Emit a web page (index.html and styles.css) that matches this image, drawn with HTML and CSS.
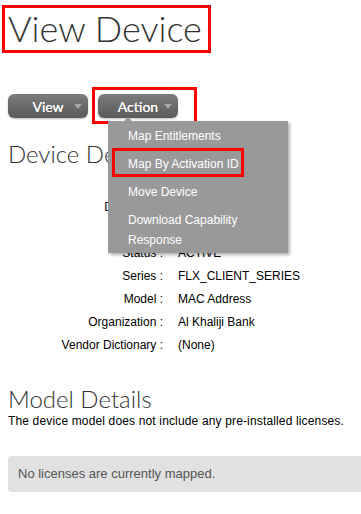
FILE: index.html
```html
<!DOCTYPE html>
<html>
<head>
<meta charset="utf-8">
<link rel="stylesheet" href="styles.css">
</head>
<body>
<div class="page">
  <h1 class="title"><span class="annot annot-title"></span>View Device</h1>

  <div class="toolbar">
    <div class="btn-wrap">
      <button class="btn">View<span class="caret"></span></button>
    </div>
    <div class="btn-wrap">
      <button class="btn">Action<span class="caret"></span></button>
      <span class="annot annot-action"></span>
      <ul class="menu">
        <li class="menu-item">Map Entitlements</li>
        <li class="menu-item">Map By Activation ID<span class="annot annot-item"></span></li>
        <li class="menu-item">Move Device</li>
        <li class="menu-item">Download Capability Response</li>
      </ul>
    </div>
  </div>

  <h2 class="section-title">Device Details</h2>
  <div class="details">
    <div class="label">Name :</div><div class="value">CLIENT-0001</div>
    <div class="label">Device ID :</div><div class="value">CLIENT-0001</div>
    <div class="label">Type :</div><div class="value">DEVICE</div>
    <div class="label">Status :</div><div class="value">ACTIVE</div>
    <div class="label">Series :</div><div class="value">FLX_CLIENT_SERIES</div>
    <div class="label">Model :</div><div class="value">MAC Address</div>
    <div class="label">Organization :</div><div class="value">Al Khaliji Bank</div>
    <div class="label">Vendor Dictionary :</div><div class="value">(None)</div>
  </div>

  <h2 class="section-title model-title">Model Details</h2>
  <p class="note">The device model does not include any pre-installed licenses.</p>
  <div class="notice">No licenses are currently mapped.</div>
</div>
</body>
</html>
```

FILE: styles.css
```css
html {
  overflow: hidden;
}
body {
  margin: 0;
  background: #fff;
  font-family: "Liberation Sans", Arial, sans-serif;
  font-size: 12px;
  color: #000;
}
.page {
  width: 400px;
  padding: 0 0 0 8px;
}
.title {
  position: relative;
  margin: 6px 0 0;
  font-family: Lato, sans-serif;
  font-weight: 300;
  font-size: 36px;
  line-height: 44px;
  color: #333;
}
.annot {
  position: absolute;
  border: 3px solid #ff0000;
  box-sizing: border-box;
  pointer-events: none;
}
.annot-title {
  left: -6px;
  top: -1px;
  width: 209px;
  height: 48px;
}
.toolbar {
  display: flex;
  gap: 10px;
  margin-top: 44px;
}
.btn-wrap {
  position: relative;
}
.btn {
  position: relative;
  display: block;
  width: 80px;
  height: 24px;
  padding: 2px 0 0;
  border: 0;
  border-radius: 6px;
  background: linear-gradient(#7c7c7c, #5a5a5a);
  box-shadow: 0 1px 2px rgba(0,0,0,0.25);
  color: #fff;
  font-family: Lato, sans-serif;
  font-weight: 400;
  font-size: 14px;
  line-height: 22px;
  text-align: center;
  text-shadow: 0 0 0.4px #fff;
}
.caret {
  position: absolute;
  right: 6px;
  top: 10px;
  width: 0;
  height: 0;
  border-left: 4.5px solid transparent;
  border-right: 4.5px solid transparent;
  border-top: 5px solid #a8a8a8;
}
.annot-action {
  left: -6px;
  top: -7px;
  width: 105px;
  height: 37px;
}
.menu {
  position: absolute;
  left: 10px;
  top: 27px;
  width: 180px;
  margin: 0;
  padding: 0;
  list-style: none;
  background: #999;
  box-shadow: 2px 2px 3px rgba(0,0,0,0.3);
  z-index: 5;
}
.menu::before {
  content: "";
  position: absolute;
  left: 16px;
  top: -4px;
  border-left: 4px solid transparent;
  border-right: 4px solid transparent;
  border-bottom: 4px solid #999;
}
.menu-item {
  position: relative;
  padding: 5px 14px 3px 20px;
  line-height: 20px;
  color: #fff;
  font-size: 12px;
}
.annot-item {
  left: 4px;
  top: -1px;
  width: 132px;
  height: 29px;
}
.section-title {
  margin: 22px 0 0;
  font-family: Lato, sans-serif;
  font-weight: 300;
  font-size: 24px;
  line-height: 28px;
  color: #333;
}
.details {
  display: grid;
  grid-template-columns: 155px auto;
  column-gap: 15px;
  margin-top: 5px;
  line-height: 23px;
}
.label {
  text-align: right;
}
.model-title {
  margin-top: 28px;
}
.note {
  margin: 0;
  line-height: 16px;
  letter-spacing: 0.15px;
}
.notice {
  margin-top: 27px;
  height: 36px;
  padding-left: 10px;
  border-radius: 4px;
  background: #e1e1e1;
  color: #555;
  font-size: 13px;
  line-height: 36px;
}
```
